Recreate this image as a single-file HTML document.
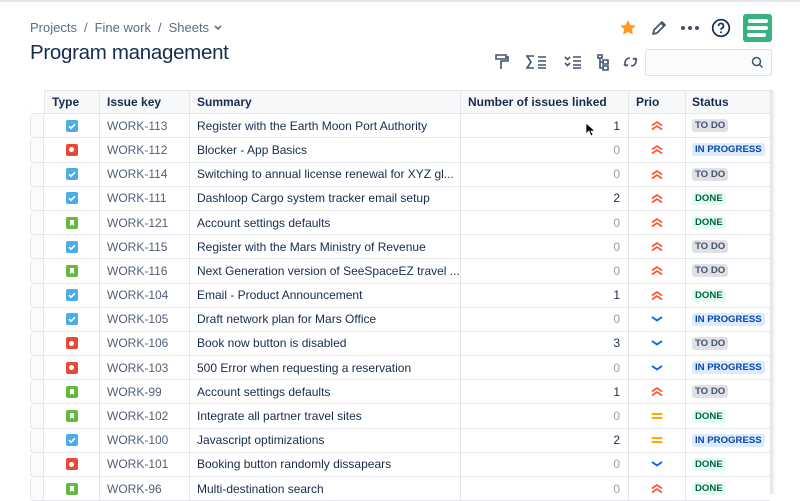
<!DOCTYPE html><html><head><style>
*{box-sizing:border-box;margin:0;padding:0}
body{width:800px;height:494px;overflow:hidden;background:#fff;font-family:"Liberation Sans",sans-serif;color:#172b4d;position:relative}
.top{position:absolute;left:0;top:0;width:800px;height:2px;background:#e4e6ea}
.bc{position:absolute;left:30px;top:20px;font-size:13px;color:#5e6c84}
.bc span{margin:0 7px}
h1{position:absolute;left:30px;top:41px;font-size:20.5px;font-weight:normal;color:#172b4d;letter-spacing:-0.3px}
.tbl{position:absolute;left:30px;top:90px;width:740px}
.row{display:flex;height:24.2px;font-size:12px;align-items:stretch}
.c{border-right:1px solid #e4e6ea;border-bottom:1px solid #e4e6ea;display:flex;align-items:center;padding:0 7px;white-space:nowrap;overflow:hidden}
.h{width:14px;border-left:1px solid #e4e6ea;border-radius:4px 0 0 4px;padding:0;background:#fafbfc}
.t{width:56px;justify-content:center}
.k{width:90px;color:#505f79}
.s{width:271px}
.n{width:168px;justify-content:flex-end;padding-right:8px}
.p{width:57px;justify-content:center}
.st{width:84px;border-right:none;padding:0 6px}
.hd .c{background:#f7f8f9;font-weight:bold;border-top:1px solid #e4e6ea;height:24px}
.hd .h{background:#fff;border:none;border-bottom:1px solid #e4e6ea}
.hd .t{border-left:1px solid #e4e6ea}
.z{color:#97a0af}
.ic{width:12px;height:12px;border-radius:2px;display:flex;align-items:center;justify-content:center}
.lz{font-size:9.6px;font-weight:bold;padding:1px 3px;border-radius:3px;letter-spacing:0}
.todo{background:#dfe1e6;color:#42526e}.ip{background:#deebff;color:#0747a6}.dn{background:#e3fcef;color:#006644}
.shadow{position:absolute;left:770px;top:90px;width:6px;height:404px;background:linear-gradient(to right,#dfe1e6,#fff)}
</style></head><body>
<div class="top"></div>
<div class="bc">Projects<span>/</span>Fine work<span>/</span>Sheets <svg width="10" height="8" viewBox="0 0 10 8"><path d="M2 2l3 3 3-3" stroke="#5e6c84" stroke-width="1.6" fill="none"/></svg></div>
<h1>Program management</h1>
<svg style="position:absolute;left:618px;top:18px" width="20" height="20" viewBox="0 0 20 20"><path d="M10 2l2.4 5 5.4.6-4 3.7 1.1 5.3L10 14l-4.9 2.6 1.1-5.3-4-3.7 5.4-.6z" fill="#ff991f"/></svg>
<svg style="position:absolute;left:650px;top:19px" width="18" height="18" viewBox="0 0 18 18"><path d="M3 15l1-4 8-8 3 3-8 8z M11 4l3 3" stroke="#42526e" stroke-width="1.7" fill="none" stroke-linejoin="round"/></svg>
<div style="position:absolute;left:681px;top:26px;display:flex;gap:3px"><i style="width:4px;height:4px;border-radius:2px;background:#42526e"></i><i style="width:4px;height:4px;border-radius:2px;background:#42526e"></i><i style="width:4px;height:4px;border-radius:2px;background:#42526e"></i></div>
<svg style="position:absolute;left:711px;top:18px" width="20" height="20" viewBox="0 0 20 20"><circle cx="10" cy="10" r="8.3" stroke="#172b4d" stroke-width="1.7" fill="none"/><path d="M7.5 8a2.5 2.5 0 1 1 3.3 2.3c-.6.3-.8.7-.8 1.4" stroke="#172b4d" stroke-width="1.7" fill="none"/><circle cx="10" cy="14.3" r="1" fill="#172b4d"/></svg>
<div style="position:absolute;left:743px;top:14px;width:29px;height:28px;background:#36b37e;border-radius:3px"><svg width="29" height="28" viewBox="0 0 29 28"><path d="M7 7h16M6 14h17M6 21h15" stroke="#fff" stroke-width="4" stroke-linecap="round"/></svg></div>
<svg style="position:absolute;left:494px;top:53px" width="150" height="18" viewBox="0 0 150 18" stroke="#42526e" stroke-width="1.6" fill="none">
<path d="M2 2h10v4H2z M12 4h2v4H7v3 M7 11v5"/>
<path d="M40 3h-7l4 6-4 6h7 M44 4h8M44 8h8M44 12h8M44 15h8"/>
<path d="M71 4l2.5 2.5L76 4 M71 10l2.5 2.5L76 10 M79 4h8M79 8h8M79 12h8M79 15h8"/>
<path d="M104 2h4v3h-4z M106 5v10h3 M106 9h3 M109 7h5v4h-5z M109 13h5v4h-5z"/>
<path d="M136 5a5 5 0 0 0-4 8 M132 13l-2-2 M132 13l2-1.5 M137 13a5 5 0 0 0 4-8 M141 5l2 2 M141 5l-2 1.5"/>
</svg>
<div style="position:absolute;left:645px;top:49px;width:127px;height:27px;border:1.5px solid #dfe1e6;border-radius:3px;background:#fafbfc"><svg style="position:absolute;right:7px;top:6px" width="13" height="13" viewBox="0 0 13 13"><circle cx="5.5" cy="5.5" r="4" stroke="#42526e" stroke-width="1.5" fill="none"/><path d="M8.5 8.5l3 3" stroke="#42526e" stroke-width="1.5"/></svg></div>
<div class="shadow"></div>
<div class="tbl">
<div class="row hd"><div class="c h"></div><div class="c t" style="justify-content:flex-start">Type</div><div class="c k" style="color:#172b4d">Issue key</div><div class="c s">Summary</div><div class="c n" style="justify-content:flex-start;padding-left:7px">Number of issues linked</div><div class="c p" style="justify-content:flex-start">Prio</div><div class="c st">Status</div></div>
<div id="rows"></div>
</div>
<svg style="position:absolute;left:585px;top:122px" width="10" height="15" viewBox="0 0 10 15"><path d="M1 1v11l3-3 2 5 2-1-2-4h4z" fill="#000" stroke="#fff" stroke-width=".8"/></svg>
<script>
var d=[["113","t","Register with the Earth Moon Port Authority","1","h","todo"],["112","b","Blocker - App Basics","0","h","ip"],["114","t","Switching to annual license renewal for XYZ gl...","0","h","todo"],["111","t","Dashloop Cargo system tracker email setup","2","h","dn"],["121","s","Account settings defaults","0","h","dn"],["115","t","Register with the Mars Ministry of Revenue","0","h","todo"],["116","s","Next Generation version of SeeSpaceEZ travel ...","0","h","todo"],["104","t","Email - Product Announcement","1","h","dn"],["105","t","Draft network plan for Mars Office","0","l","ip"],["106","b","Book now button is disabled","3","l","todo"],["103","b","500 Error when requesting a reservation","0","l","ip"],["99","s","Account settings defaults","1","h","todo"],["102","s","Integrate all partner travel sites","0","m","dn"],["100","t","Javascript optimizations","2","m","ip"],["101","b","Booking button randomly dissapears","0","l","dn"],["96","s","Multi-destination search","0","h","dn"]];
var ic={t:'<div class="ic" style="background:#4bade8"><svg width="12" height="12"><path d="M3 6.2l2 2 4-4" stroke="#fff" stroke-width="1.6" fill="none"/></svg></div>',
b:'<div class="ic" style="background:#e5493a"><div style="width:5px;height:5px;border-radius:3px;background:#fff"></div></div>',
s:'<div class="ic" style="background:#63ba3c"><svg width="12" height="12"><path d="M4 3h4v6L6 7.5 4 9z" fill="#fff"/></svg></div>'};
var pr={h:'<svg width="14" height="11"><path d="M2 5.5l5-3.5 5 3.5M2 9.5l5-3.5 5 3.5" stroke="#ff5630" stroke-width="1.7" fill="none"/></svg>',
l:'<svg width="14" height="8"><path d="M2 2l5 3.5 5-3.5" stroke="#0065ff" stroke-width="1.8" fill="none"/></svg>',
m:'<svg width="14" height="10"><path d="M1.5 3h11M1.5 7h11" stroke="#ffab00" stroke-width="1.9"/></svg>'};
var st={todo:"TO DO",ip:"IN PROGRESS",dn:"DONE"};
var h="";d.forEach(function(r){h+='<div class="row"><div class="c h"></div><div class="c t">'+ic[r[1]]+'</div><div class="c k">WORK-'+r[0]+'</div><div class="c s">'+r[2]+'</div><div class="c n'+(r[3]=="0"?" z":"")+'">'+r[3]+'</div><div class="c p">'+pr[r[4]]+'</div><div class="c st"><span class="lz '+r[5]+'">'+st[r[5]]+'</span></div></div>'});
document.getElementById("rows").innerHTML=h;
</script>
</body></html>
